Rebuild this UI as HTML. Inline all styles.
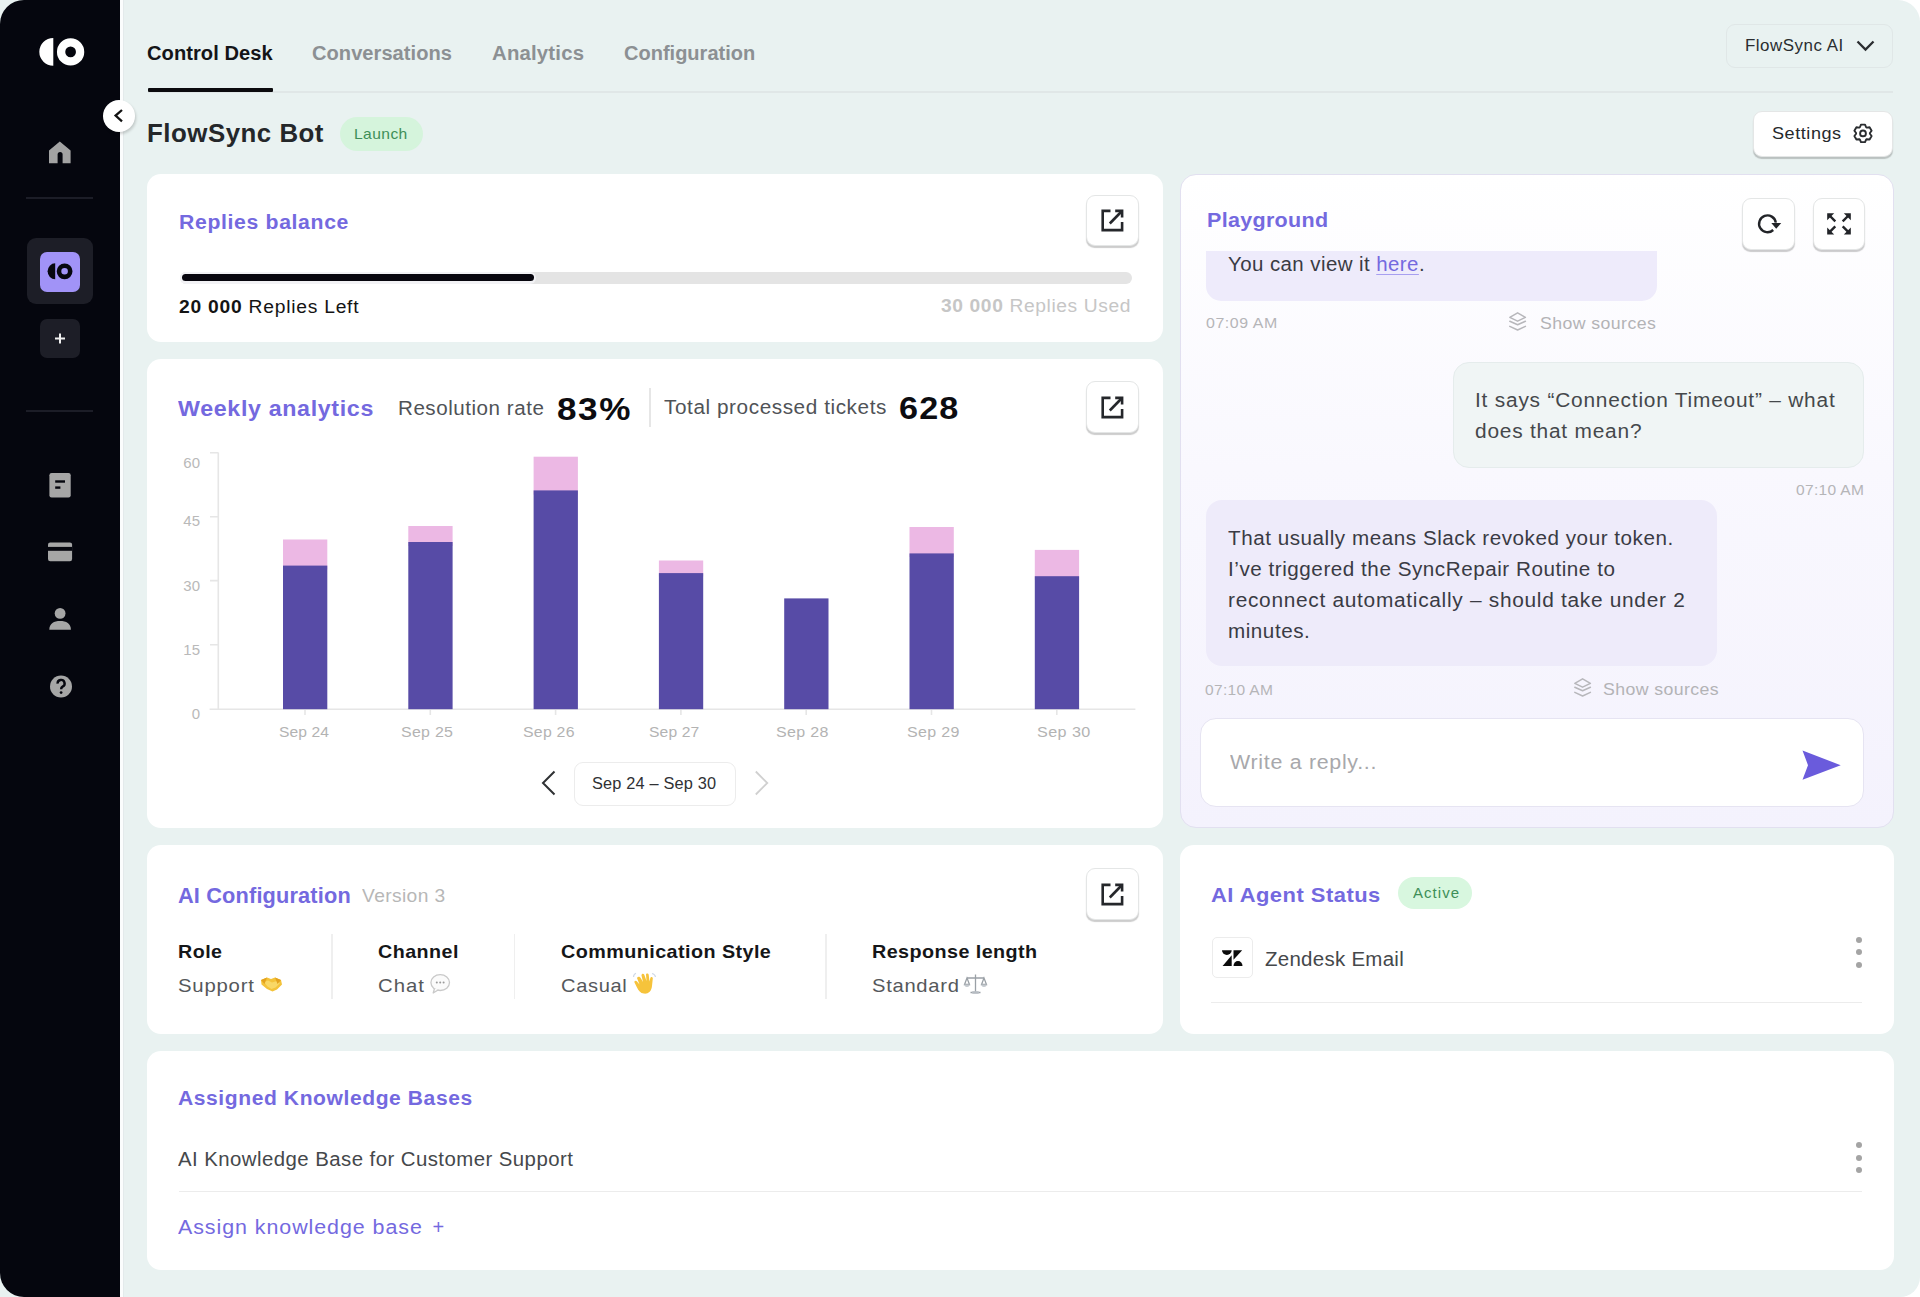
<!DOCTYPE html>
<html><head><meta charset="utf-8"><title>FlowSync Bot</title>
<style>
html,body{margin:0;padding:0;background:#ffffff;}
body{width:1920px;height:1297px;overflow:hidden;font-family:'Liberation Sans',sans-serif;}
#root{position:relative;width:1920px;height:1297px;overflow:hidden;background:#ffffff;}
.t{position:absolute;white-space:nowrap;line-height:1;font-family:'Liberation Sans',sans-serif;}
.abs{position:absolute;}
#main{position:absolute;left:0;top:0;width:1920px;height:1297px;background:#e9f2f1;border-radius:0 22px 20px 0;}
#side{position:absolute;left:0;top:0;width:120px;height:1297px;background:#05060e;border-radius:24px 0 0 24px;}
#sidestrip{position:absolute;left:120px;top:0;width:3px;height:1297px;background:#fbfdfd;border-right:1px solid #e3eaeb;}
.card{position:absolute;background:#ffffff;border-radius:14px;}
.ibtn{position:absolute;background:#fff;border:1px solid #e4e6e6;border-radius:9px;box-shadow:0 2.5px 1px -0.5px rgba(0,0,0,0.2);box-sizing:border-box;}
.sep{position:absolute;background:#1c1d27;height:2px;}
.gbar{position:absolute;}
.dots{position:absolute;width:6px;}
.dots i{display:block;width:6px;height:6px;border-radius:3px;background:#a4a4a4;margin-bottom:6.7px;}

</style></head><body>
<div id="root">
<div id="main"></div>
<div id="side"></div>
<div id="sidestrip"></div>

<!-- sidebar logo -->
<svg class="abs" style="left:36px;top:34px" width="52" height="36" viewBox="36 34 52 36">
  <path d="M53.3 37.9 A14 13.9 0 0 0 53.3 65.7 Z" fill="#fff"/>
  <circle cx="70.6" cy="51.9" r="9.5" fill="none" stroke="#fff" stroke-width="8.3"/>
</svg>
<!-- home -->
<svg class="abs" style="left:44px;top:136px" width="32" height="32" viewBox="44 136 32 32">
  <path d="M49 150.5 L59.8 141.6 L70.6 150.5 L70.6 163.2 L62.6 163.2 L62.6 154.5 A2.5 2.5 0 0 0 57.6 154.5 L57.6 163.2 L49 163.2 Z" fill="#a3a3a3"/>
</svg>
<div class="sep" style="left:26px;top:197px;width:67px"></div>
<div class="abs" style="left:27px;top:238px;width:66px;height:66px;background:#1d1e27;border-radius:9px"></div>
<div class="abs" style="left:40px;top:252px;width:40px;height:40px;background:#a193f7;border-radius:7px"></div>
<svg class="abs" style="left:40px;top:252px" width="40" height="40" viewBox="40 252 40 40">
  <path d="M55.2 263.3 A7.6 8 0 0 0 55.2 279.3 Z" fill="#07070f"/>
  <circle cx="64.6" cy="271.3" r="5.6" fill="none" stroke="#07070f" stroke-width="4.6"/>
</svg>
<div class="abs" style="left:40px;top:319px;width:40px;height:39px;background:#1d1e27;border-radius:7px"></div>
<svg class="abs" style="left:40px;top:319px" width="40" height="39" viewBox="0 0 40 39">
  <path d="M20 14.5 V24.5 M15 19.5 H25" stroke="#f0f0f0" stroke-width="2" />
</svg>
<div class="sep" style="left:26px;top:410px;width:67px"></div>
<!-- doc icon -->
<svg class="abs" style="left:44px;top:468px" width="32" height="34" viewBox="44 468 32 34">
  <rect x="49.4" y="473" width="21.3" height="24.4" rx="2.2" fill="#a6a6a6"/>
  <rect x="55.2" y="480.3" width="9.8" height="2.4" fill="#05060e"/>
  <rect x="55.2" y="486.4" width="5.2" height="2.4" fill="#05060e"/>
</svg>
<!-- card icon -->
<svg class="abs" style="left:44px;top:538px" width="32" height="28" viewBox="44 538 32 28">
  <rect x="48" y="542.4" width="24.1" height="18.9" rx="2.2" fill="#a6a6a6"/>
  <rect x="48" y="546.9" width="24.1" height="3.9" fill="#05060e"/>
</svg>
<!-- person icon -->
<svg class="abs" style="left:44px;top:602px" width="32" height="32" viewBox="44 602 32 32">
  <circle cx="60.1" cy="613.4" r="5.4" fill="#a6a6a6"/>
  <path d="M49.3 629.8 C49.3 623.5 54 621 60.1 621 C66.2 621 70.9 623.5 70.9 629.8 Z" fill="#a6a6a6"/>
</svg>
<!-- help icon -->
<svg class="abs" style="left:44px;top:670px" width="34" height="34" viewBox="44 670 34 34">
  <circle cx="61" cy="686.5" r="11" fill="#a6a6a6"/>
  <path d="M57.6 683.6 A3.5 3.5 0 1 1 62.6 686.6 C61.4 687.3 61.1 688 61.1 689.2" fill="none" stroke="#05060e" stroke-width="2.4"/>
  <circle cx="61.1" cy="692.6" r="1.4" fill="#05060e"/>
</svg>
<!-- collapse circle -->
<div class="abs" style="left:102.5px;top:100px;width:32px;height:32px;border-radius:50%;background:#fff;box-shadow:1px 2px 3px rgba(0,0,0,.18)"></div>
<svg class="abs" style="left:102.5px;top:100px" width="32" height="32" viewBox="0 0 32 32">
  <path d="M19 10 L12.6 15.6 L19 21.3" fill="none" stroke="#111" stroke-width="2.3"/>
</svg>

<!-- tabs -->
<div class="abs" style="left:148px;top:91px;width:1745px;height:1.5px;background:#e0e7e7"></div>
<div class="abs" style="left:148px;top:88px;width:125px;height:4px;background:#0b0b0e;border-radius:1px"></div>
<!-- flowsync AI dropdown -->
<div class="abs" style="left:1726px;top:23.5px;width:167px;height:44px;border:1px solid #e0e7e7;border-radius:9px;box-sizing:border-box;"></div>
<svg class="abs" style="left:1852px;top:36px" width="28" height="20" viewBox="1852 36 28 20">
  <path d="M1857.5 41.5 L1865.5 49.5 L1873.5 41.5" fill="none" stroke="#2a2d30" stroke-width="2.3"/>
</svg>
<!-- launch badge -->
<div class="abs" style="left:340px;top:117px;width:83px;height:33.5px;background:#d5f4dc;border-radius:17px"></div>
<!-- settings -->
<div class="ibtn" style="left:1752.5px;top:111px;width:140.5px;height:45.5px"></div>
<svg class="abs" style="left:1850px;top:120px" width="26" height="27" viewBox="1850 120 26 27">
  <path d="M1859.87 127.25 L1860.98 124.63 L1865.02 124.63 L1866.13 127.25 L1866.76 127.61 L1869.58 127.26 L1871.61 130.77 L1869.89 133.04 L1869.89 133.76 L1871.61 136.03 L1869.58 139.54 L1866.76 139.19 L1866.13 139.55 L1865.02 142.17 L1860.98 142.17 L1859.87 139.55 L1859.24 139.19 L1856.42 139.54 L1854.39 136.03 L1856.11 133.76 L1856.11 133.04 L1854.39 130.77 L1856.42 127.26 L1859.24 127.61 Z" fill="none" stroke="#2a2d30" stroke-width="1.9" stroke-linejoin="round"/>
  <circle cx="1863" cy="133.4" r="2.9" fill="none" stroke="#2a2d30" stroke-width="1.9"/>
</svg>

<!-- ===== card 1 ===== -->
<div class="card" style="left:147px;top:173.5px;width:1016px;height:168.5px"></div>
<div class="ibtn" style="left:1085.5px;top:194.5px;width:53.5px;height:51.5px"></div>
<svg class="abs" style="left:1099px;top:207px" width="28" height="28" viewBox="1099 207 28 28">
  <path d="M1110.8 210.9 H1102.7 V1230.1" fill="none"/>
  <path d="M1110.5 210.9 H1102.7 V230.1 H1122.1 V222" fill="none" stroke="#25272b" stroke-width="2.6"/>
  <path d="M1115.2 210.9 H1122.1 V217.6" fill="none" stroke="#25272b" stroke-width="2.6"/>
  <path d="M1109.8 223.5 L1121.5 211.5" fill="none" stroke="#25272b" stroke-width="2.6"/>
</svg>
<div class="abs" style="left:180px;top:271.8px;width:952px;height:12.5px;background:#e4e4e4;border-radius:6px"></div>
<div class="abs" style="left:180px;top:271.8px;width:356px;height:12.5px;background:#f2f2f5;border-radius:6px"></div>
<div class="abs" style="left:182px;top:274.4px;width:351.5px;height:6.9px;background:#07060e;border-radius:3.5px"></div>

<!-- ===== card 2 ===== -->
<div class="card" style="left:147px;top:358.5px;width:1016px;height:469.5px"></div>
<div class="abs" style="left:649px;top:388px;width:1.5px;height:39px;background:#e6e6e6"></div>
<div class="ibtn" style="left:1085.5px;top:381px;width:53.5px;height:51.5px"></div>
<svg class="abs" style="left:1099px;top:393.5px" width="28" height="28" viewBox="1099 207 28 28">
  <path d="M1110.5 210.9 H1102.7 V230.1 H1122.1 V222" fill="none" stroke="#25272b" stroke-width="2.6"/>
  <path d="M1115.2 210.9 H1122.1 V217.6" fill="none" stroke="#25272b" stroke-width="2.6"/>
  <path d="M1109.8 223.5 L1121.5 211.5" fill="none" stroke="#25272b" stroke-width="2.6"/>
</svg>
<!-- chart -->
<svg class="abs" style="left:0;top:0" width="1200" height="820" viewBox="0 0 1200 820">
  <g stroke="#e6e6e6" stroke-width="1.6" fill="none">
    <path d="M218.3 452.5 V709.2"/>
    <path d="M210 452.8 H218.3 M210 516.8 H218.3 M210 580.6 H218.3 M210 644.8 H218.3"/>
    <path d="M209.6 709.2 H1135.4"/>
    <path d="M305 709.2 V715 M430.3 709.2 V715 M555.6 709.2 V715 M680.9 709.2 V715 M806.2 709.2 V715 M931.5 709.2 V715 M1056.8 709.2 V715"/>
  </g>
  <g fill="#ecb8e4">
    <rect x="283" y="539.5" width="44.3" height="30"/>
    <rect x="408.3" y="526" width="44.3" height="20"/>
    <rect x="533.6" y="456.7" width="44.3" height="38"/>
    <rect x="658.9" y="560.5" width="44.3" height="16"/>
    <rect x="909.5" y="527" width="44.3" height="30"/>
    <rect x="1034.8" y="549.9" width="44.3" height="30"/>
  </g>
  <g fill="#574ba6">
    <rect x="283" y="565.6" width="44.3" height="143.6"/>
    <rect x="408.3" y="542" width="44.3" height="167.2"/>
    <rect x="533.6" y="490.4" width="44.3" height="218.8"/>
    <rect x="658.9" y="573.1" width="44.3" height="136.1"/>
    <rect x="784.2" y="598.4" width="44.3" height="110.8"/>
    <rect x="909.5" y="553.4" width="44.3" height="155.8"/>
    <rect x="1034.8" y="576.2" width="44.3" height="133"/>
  </g>
  <path d="M554.5 771.5 L543 783 L554.5 794.5" fill="none" stroke="#2f3134" stroke-width="2"/>
</svg>
<svg class="abs" style="left:740px;top:760px" width="40" height="40" viewBox="740 760 40 40">
  <path d="M755.8 771.5 L767.3 783 L755.8 794.5" fill="none" stroke="#d0d0d0" stroke-width="1.8"/>
</svg>
<div class="abs" style="left:574px;top:761.5px;width:161.5px;height:44px;border:1px solid #ececec;border-radius:9px;box-sizing:border-box"></div>

<!-- ===== playground ===== -->
<div class="abs" style="left:1180px;top:173.5px;width:713.5px;height:654.5px;border:1.5px solid #e2e0f0;border-radius:16px;box-sizing:border-box;background:linear-gradient(180deg,#ffffff 0%,#f9f8fe 45%,#f4f2fd 100%)"></div>
<div class="abs" style="left:1205.6px;top:250.5px;width:451.2px;height:50px;background:#eeebfb;border-radius:0 0 15px 15px"></div>
<div class="ibtn" style="left:1742.3px;top:198.2px;width:52.7px;height:51.5px"></div>
<div class="ibtn" style="left:1812.6px;top:198.2px;width:52.8px;height:51.5px"></div>
<svg class="abs" style="left:1755px;top:210px" width="28" height="28" viewBox="1755 210 28 28">
  <path d="M1773.2 230.0 A8.4 8.4 0 1 1 1775.8 222.6" fill="none" stroke="#222428" stroke-width="2.4"/>
  <path d="M1771.3 223.0 L1781.2 223.0 L1776.2 228.8 Z" fill="#222428"/>
</svg>
<svg class="abs" style="left:1822px;top:208px" width="34" height="32" viewBox="1822 208 34 32">
  <g fill="none" stroke="#222428" stroke-width="2.4">
    <path d="M1828.5 214.5 L1835.3 221.3"/>
    <path d="M1849.5 214.5 L1842.7 221.3"/>
    <path d="M1828.5 233.2 L1835.3 226.4"/>
    <path d="M1849.5 233.2 L1842.7 226.4"/>
  </g>
  <g fill="#222428">
    <path d="M1827.2 213.2 H1834.2 L1827.2 220.2 Z"/>
    <path d="M1850.8 213.2 H1843.8 L1850.8 220.2 Z"/>
    <path d="M1827.2 234.5 H1834.2 L1827.2 227.5 Z"/>
    <path d="M1850.8 234.5 H1843.8 L1850.8 227.5 Z"/>
  </g>
</svg>
<!-- layers icons -->
<svg class="abs" style="left:1508px;top:311px" width="24" height="24" viewBox="0 0 24 24">
  <g fill="none" stroke="#b7b7bb" stroke-width="1.5" stroke-linejoin="round" stroke-linecap="round">
    <path d="M9.6 1.8 L17.4 6.3 L9.6 10.2 L1.8 6.3 Z"/>
    <path d="M1.8 10.3 L9.6 13.8 L17.4 10.3"/>
    <path d="M1.8 15.4 L9.6 19.0 L17.4 15.4"/>
  </g>
</svg>
<svg class="abs" style="left:1572.8px;top:677.2px" width="24" height="24" viewBox="0 0 24 24">
  <g fill="none" stroke="#b7b7bb" stroke-width="1.5" stroke-linejoin="round" stroke-linecap="round">
    <path d="M9.6 1.8 L17.4 6.3 L9.6 10.2 L1.8 6.3 Z"/>
    <path d="M1.8 10.3 L9.6 13.8 L17.4 10.3"/>
    <path d="M1.8 15.4 L9.6 19.0 L17.4 15.4"/>
  </g>
</svg>
<div class="abs" style="left:1452.6px;top:361.5px;width:411.3px;height:106.5px;background:#f0f5f5;border:1px solid #e5ecec;border-radius:16px;box-sizing:border-box"></div>
<div class="abs" style="left:1205.8px;top:500px;width:511.4px;height:166.2px;background:#eeebfa;border-radius:16px"></div>
<div class="abs" style="left:1200.2px;top:717.8px;width:664.2px;height:89.2px;background:#fff;border:1px solid #e6e4f2;border-radius:16px;box-sizing:border-box"></div>
<svg class="abs" style="left:1798px;top:746px" width="48" height="38" viewBox="1798 746 48 38">
  <path d="M1802.5 750.6 L1840.7 765.2 L1802.5 779.7 L1808 765.2 Z" fill="#6a5bdc"/>
</svg>

<!-- ===== AI config card ===== -->
<div class="card" style="left:147px;top:844.5px;width:1016px;height:189px"></div>
<div class="ibtn" style="left:1085.5px;top:868px;width:53.5px;height:51.5px"></div>
<svg class="abs" style="left:1099px;top:880.5px" width="28" height="28" viewBox="1099 207 28 28">
  <path d="M1110.5 210.9 H1102.7 V230.1 H1122.1 V222" fill="none" stroke="#25272b" stroke-width="2.6"/>
  <path d="M1115.2 210.9 H1122.1 V217.6" fill="none" stroke="#25272b" stroke-width="2.6"/>
  <path d="M1109.8 223.5 L1121.5 211.5" fill="none" stroke="#25272b" stroke-width="2.6"/>
</svg>
<div class="abs" style="left:331.2px;top:934px;width:1.5px;height:65px;background:#efefef"></div>
<div class="abs" style="left:513.8px;top:934px;width:1.5px;height:65px;background:#efefef"></div>
<div class="abs" style="left:825.3px;top:934px;width:1.5px;height:65px;background:#efefef"></div>

<!-- ===== agent status ===== -->
<div class="card" style="left:1180px;top:844.5px;width:714px;height:189.5px"></div>
<div class="abs" style="left:1398.4px;top:877.2px;width:73.5px;height:32px;background:#d8f7df;border-radius:16px"></div>
<div class="abs" style="left:1211.7px;top:937.3px;width:41.4px;height:40.7px;border:1px solid #ececec;border-radius:5px;box-sizing:border-box;background:#fff"></div>
<svg class="abs" style="left:1218px;top:946px" width="30" height="26" viewBox="1218 946 30 26">
  <path d="M1222 950.3 H1231.7 A4.85 4.6 0 0 1 1222 950.3 Z" fill="#0b0b0b"/>
  <path d="M1222.6 965.9 L1231.7 955.3 V965.9 Z" fill="#0b0b0b"/>
  <path d="M1233.5 950.3 H1242.2 L1233.5 959.7 Z" fill="#0b0b0b"/>
  <path d="M1233.5 965.9 A4.5 4.9 0 0 1 1242.5 965.9 Z" fill="#0b0b0b"/>
</svg>
<div class="dots" style="left:1855.7px;top:936.6px"><i></i><i></i><i></i></div>
<div class="abs" style="left:1211px;top:1001.5px;width:651px;height:1.5px;background:#ececec"></div>

<!-- ===== knowledge ===== -->
<div class="card" style="left:147px;top:1051px;width:1747px;height:219px"></div>
<div class="dots" style="left:1855.8px;top:1141.9px"><i></i><i></i><i></i></div>
<div class="abs" style="left:179px;top:1190.5px;width:1683px;height:1.5px;background:#ececec"></div>

<!-- emojis -->
<svg class="abs" style="left:258px;top:972px" width="26" height="24" viewBox="0 0 26 24">
  <path d="M3 8 L9 5.5 L13 7 L17 5.5 L23 8 L24 12.5 L19 17.5 L14.5 19.5 L9 17 L3.5 12.5 Z" fill="#f4c33a"/>
  <path d="M6 10 L10 8.5 L14 10.5 L19 9 L22 11 L17.5 15.5 L13.5 17 L9.5 14.5 Z" fill="#f9d866"/>
  <path d="M3 8 L9 5.5 L6.5 12 Z M23 8 L17 5.5 L19.5 12 Z" fill="#e3a21e"/>
</svg>
<svg class="abs" style="left:428px;top:972px" width="24" height="24" viewBox="0 0 24 24">
  <ellipse cx="12.2" cy="10.6" rx="9.3" ry="7.9" fill="#fbfbfb" stroke="#c9c9c9" stroke-width="1.3"/>
  <path d="M6.5 16.5 L5.2 21 L10.5 17.8" fill="#fbfbfb" stroke="#c9c9c9" stroke-width="1.3" stroke-linejoin="round"/>
  <circle cx="8.8" cy="10.6" r="1" fill="#9a9a9a"/><circle cx="12.2" cy="10.6" r="1" fill="#9a9a9a"/><circle cx="15.6" cy="10.6" r="1" fill="#9a9a9a"/>
</svg>
<svg class="abs" style="left:631px;top:971px" width="26" height="26" viewBox="0 0 26 26">
  <path d="M6 7 C7 5 9 5.5 10 7.5 L12 11 L10.5 4.5 C10.3 2.8 12.6 2.2 13.3 3.8 L15.5 10 L15 3.8 C15 2 17.4 2 17.7 3.8 L18.5 10.5 L19.4 6.8 C19.9 5.3 22 5.8 21.8 7.6 L21 15 C20.5 20.5 17 23.2 12.8 22.6 C9.5 22.1 7.5 19.8 6 16.5 L3.5 11.5 C2.8 10 4.8 9 5.8 10.2 L8.5 13.5 Z" fill="#f6c33b"/>
  <path d="M2.5 6 C2.5 4 3.5 2.8 5 2.2 M21 2.5 C23 3 24.2 4.3 24.5 6" fill="none" stroke="#cfd8e6" stroke-width="1.2"/>
</svg>
<svg class="abs" style="left:963px;top:972px" width="26" height="24" viewBox="0 0 26 24">
  <g fill="none" stroke="#9aa0a6" stroke-width="1.3">
    <path d="M12.5 2.5 V19.5 M4 6 H21 M7.5 20.5 H17.5"/>
    <path d="M4 6 L1.5 12.5 H6.5 Z M21 6 L18.5 12.5 H23.5 Z"/>
  </g>
  <path d="M1.3 12.5 A2.7 2.4 0 0 0 6.7 12.5 Z M18.3 12.5 A2.7 2.4 0 0 0 23.7 12.5 Z" fill="#c4c9ce"/>
  <rect x="9" y="19.2" width="7" height="2.6" rx="1" fill="#b6bcc2"/>
</svg>

<div class="t" style="left:147.00px;top:43.07px;font-size:20px;font-weight:700;color:#141518;letter-spacing:0.056px;transform:scaleX(1.0049);transform-origin:0 0;">Control Desk</div><div class="t" style="left:312.00px;top:43.07px;font-size:20px;font-weight:700;color:#8c9093;letter-spacing:0.040px;transform:scaleX(1.0035);transform-origin:0 0;">Conversations</div><div class="t" style="left:491.50px;top:43.07px;font-size:20px;font-weight:700;color:#8c9093;letter-spacing:0.188px;transform:scaleX(1.0172);transform-origin:0 0;">Analytics</div><div class="t" style="left:624.00px;top:43.07px;font-size:20px;font-weight:700;color:#8c9093;letter-spacing:0.004px;transform:scaleX(1.0004);transform-origin:0 0;">Configuration</div><div class="t" style="left:1745.20px;top:37.56px;font-size:16px;font-weight:400;color:#2a2d30;letter-spacing:0.483px;transform:scaleX(1.0581);transform-origin:0 0;">FlowSync AI</div><div class="t" style="left:146.55px;top:121.34px;font-size:25px;font-weight:700;color:#24272a;letter-spacing:0.492px;transform:scaleX(1.0339);transform-origin:0 0;">FlowSync Bot</div><div class="t" style="left:354.05px;top:125.90px;font-size:15px;font-weight:400;color:#3e8f58;letter-spacing:0.391px;transform:scaleX(1.0415);transform-origin:0 0;">Launch</div><div class="t" style="left:1772.35px;top:124.61px;font-size:17px;font-weight:400;color:#26292c;letter-spacing:0.517px;transform:scaleX(1.0625);transform-origin:0 0;">Settings</div><div class="t" style="left:178.90px;top:212.27px;font-size:20px;font-weight:700;color:#7469df;letter-spacing:0.614px;transform:scaleX(1.0602);transform-origin:0 0;">Replies balance</div><div class="t" style="left:178.60px;top:297.76px;font-size:18px;font-weight:400;color:#141414;letter-spacing:0.706px;transform:scaleX(1.07);transform-origin:0 0;"><b>20 000</b> Replies Left</div><div class="t" style="left:940.60px;top:297.46px;font-size:18px;font-weight:400;color:#c6c6c6;letter-spacing:0.582px;transform:scaleX(1.0669);transform-origin:0 0;"><b>30 000</b> Replies Used</div><div class="t" style="left:177.90px;top:398.08px;font-size:22px;font-weight:700;color:#7469df;letter-spacing:0.620px;transform:scaleX(1.0558);transform-origin:0 0;">Weekly analytics</div><div class="t" style="left:398.02px;top:398.99px;font-size:19.5px;font-weight:400;color:#505357;letter-spacing:0.497px;transform:scaleX(1.056);transform-origin:0 0;">Resolution rate</div><div class="t" style="left:557.48px;top:393.68px;font-size:30.5px;font-weight:700;color:#0c0c10;letter-spacing:1.359px;transform:scaleX(1.15);transform-origin:0 0;">83%</div><div class="t" style="left:663.82px;top:398.49px;font-size:19.5px;font-weight:400;color:#505357;letter-spacing:0.537px;transform:scaleX(1.0636);transform-origin:0 0;">Total processed tickets</div><div class="t" style="left:898.68px;top:393.18px;font-size:30.5px;font-weight:700;color:#0c0c10;letter-spacing:1.041px;transform:scaleX(1.12);transform-origin:0 0;">628</div><div class="t" style="left:183.31px;top:454.60px;font-size:15px;font-weight:400;color:#b9b9b9;letter-spacing:0.000px;">60</div><div class="t" style="left:183.31px;top:513.30px;font-size:15px;font-weight:400;color:#b9b9b9;letter-spacing:0.000px;">45</div><div class="t" style="left:183.31px;top:577.90px;font-size:15px;font-weight:400;color:#b9b9b9;letter-spacing:0.000px;">30</div><div class="t" style="left:183.31px;top:642.30px;font-size:15px;font-weight:400;color:#b9b9b9;letter-spacing:0.000px;">15</div><div class="t" style="left:191.66px;top:706.00px;font-size:15px;font-weight:400;color:#b9b9b9;letter-spacing:0.000px;">0</div><div class="t" style="left:279.43px;top:724.08px;font-size:15.5px;font-weight:400;color:#b3b3b3;letter-spacing:0.089px;transform:scaleX(1.009);transform-origin:0 0;">Sep 24</div><div class="t" style="left:401.23px;top:724.08px;font-size:15.5px;font-weight:400;color:#b3b3b3;letter-spacing:0.271px;transform:scaleX(1.0284);transform-origin:0 0;">Sep 25</div><div class="t" style="left:523.23px;top:724.08px;font-size:15.5px;font-weight:400;color:#b3b3b3;letter-spacing:0.233px;transform:scaleX(1.0243);transform-origin:0 0;">Sep 26</div><div class="t" style="left:648.52px;top:724.08px;font-size:15.5px;font-weight:400;color:#b3b3b3;letter-spacing:0.108px;transform:scaleX(1.0111);transform-origin:0 0;">Sep 27</div><div class="t" style="left:776.43px;top:724.08px;font-size:15.5px;font-weight:400;color:#b3b3b3;letter-spacing:0.318px;transform:scaleX(1.0335);transform-origin:0 0;">Sep 28</div><div class="t" style="left:906.83px;top:724.08px;font-size:15.5px;font-weight:400;color:#b3b3b3;letter-spacing:0.318px;transform:scaleX(1.0335);transform-origin:0 0;">Sep 29</div><div class="t" style="left:1037.02px;top:724.08px;font-size:15.5px;font-weight:400;color:#b3b3b3;letter-spacing:0.402px;transform:scaleX(1.0426);transform-origin:0 0;">Sep 30</div><div class="t" style="left:591.90px;top:775.96px;font-size:16px;font-weight:400;color:#2f3134;letter-spacing:0.173px;transform:scaleX(1.0207);transform-origin:0 0;">Sep 24 – Sep 30</div><div class="t" style="left:1207.15px;top:209.32px;font-size:21px;font-weight:700;color:#7469df;letter-spacing:0.301px;transform:scaleX(1.024);transform-origin:0 0;">Playground</div><div class="t" style="left:1228.03px;top:254.89px;font-size:19.5px;font-weight:400;color:#3a3b44;letter-spacing:0.413px;transform:scaleX(1.0484);transform-origin:0 0;">You can view it <span style="color:#7469df;text-decoration:underline;text-decoration-color:#a79ff0;text-underline-offset:3px">here</span>.</div><div class="t" style="left:1205.55px;top:314.70px;font-size:15px;font-weight:400;color:#b5b5b8;letter-spacing:0.525px;transform:scaleX(1.0616);transform-origin:0 0;">07:09 AM</div><div class="t" style="left:1539.95px;top:315.01px;font-size:17px;font-weight:400;color:#b3b3b6;letter-spacing:0.394px;transform:scaleX(1.0423);transform-origin:0 0;">Show sources</div><div class="t" style="left:1474.53px;top:390.79px;font-size:19.5px;font-weight:400;color:#45484b;letter-spacing:0.738px;transform:scaleX(1.07);transform-origin:0 0;">It says “Connection Timeout” – what</div><div class="t" style="left:1474.53px;top:421.69px;font-size:19.5px;font-weight:400;color:#45484b;letter-spacing:0.738px;transform:scaleX(1.07);transform-origin:0 0;">does that mean?</div><div class="t" style="left:1796.25px;top:481.70px;font-size:15px;font-weight:400;color:#b5b5b8;letter-spacing:0.311px;transform:scaleX(1.0356);transform-origin:0 0;">07:10 AM</div><div class="t" style="left:1227.73px;top:529.09px;font-size:19.5px;font-weight:400;color:#3a3b44;letter-spacing:0.509px;transform:scaleX(1.0582);transform-origin:0 0;">That usually means Slack revoked your token.</div><div class="t" style="left:1227.73px;top:560.09px;font-size:19.5px;font-weight:400;color:#3a3b44;letter-spacing:0.509px;transform:scaleX(1.0582);transform-origin:0 0;">I’ve triggered the SyncRepair Routine to</div><div class="t" style="left:1227.73px;top:591.09px;font-size:19.5px;font-weight:400;color:#3a3b44;letter-spacing:0.660px;transform:scaleX(1.07);transform-origin:0 0;">reconnect automatically – should take under 2</div><div class="t" style="left:1227.73px;top:622.09px;font-size:19.5px;font-weight:400;color:#3a3b44;letter-spacing:0.509px;transform:scaleX(1.0582);transform-origin:0 0;">minutes.</div><div class="t" style="left:1205.25px;top:682.20px;font-size:15px;font-weight:400;color:#b5b5b8;letter-spacing:0.311px;transform:scaleX(1.0356);transform-origin:0 0;">07:10 AM</div><div class="t" style="left:1603.15px;top:680.61px;font-size:17px;font-weight:400;color:#b3b3b6;letter-spacing:0.390px;transform:scaleX(1.0419);transform-origin:0 0;">Show sources</div><div class="t" style="left:1229.80px;top:751.87px;font-size:20px;font-weight:400;color:#a8a8ab;letter-spacing:0.650px;transform:scaleX(1.07);transform-origin:0 0;">Write a reply...</div><div class="t" style="left:178.03px;top:885.50px;font-size:21.5px;font-weight:700;color:#7469df;letter-spacing:0.141px;transform:scaleX(1.0128);transform-origin:0 0;">AI Configuration</div><div class="t" style="left:362.27px;top:886.74px;font-size:18.5px;font-weight:400;color:#b7b7b7;letter-spacing:0.359px;transform:scaleX(1.0387);transform-origin:0 0;">Version 3</div><div class="t" style="left:178.15px;top:942.32px;font-size:19px;font-weight:700;color:#151618;letter-spacing:0.460px;transform:scaleX(1.0346);transform-origin:0 0;">Role</div><div class="t" style="left:178.15px;top:976.02px;font-size:19px;font-weight:400;color:#55585b;letter-spacing:0.724px;transform:scaleX(1.0698);transform-origin:0 0;">Support</div><div class="t" style="left:377.75px;top:942.32px;font-size:19px;font-weight:700;color:#151618;letter-spacing:0.441px;transform:scaleX(1.0366);transform-origin:0 0;">Channel</div><div class="t" style="left:377.75px;top:976.02px;font-size:19px;font-weight:400;color:#55585b;letter-spacing:0.900px;transform:scaleX(1.07);transform-origin:0 0;">Chat</div><div class="t" style="left:560.65px;top:942.32px;font-size:19px;font-weight:700;color:#151618;letter-spacing:0.417px;transform:scaleX(1.0401);transform-origin:0 0;">Communication Style</div><div class="t" style="left:560.65px;top:976.02px;font-size:19px;font-weight:400;color:#55585b;letter-spacing:0.633px;transform:scaleX(1.0565);transform-origin:0 0;">Casual</div><div class="t" style="left:871.95px;top:942.32px;font-size:19px;font-weight:700;color:#151618;letter-spacing:0.414px;transform:scaleX(1.0394);transform-origin:0 0;">Response length</div><div class="t" style="left:871.95px;top:976.02px;font-size:19px;font-weight:400;color:#55585b;letter-spacing:0.659px;transform:scaleX(1.0636);transform-origin:0 0;">Standard</div><div class="t" style="left:1210.65px;top:883.62px;font-size:21px;font-weight:700;color:#7469df;letter-spacing:0.469px;transform:scaleX(1.044);transform-origin:0 0;">AI Agent Status</div><div class="t" style="left:1412.60px;top:886.45px;font-size:14px;font-weight:400;color:#3e8f58;letter-spacing:0.999px;transform:scaleX(1.07);transform-origin:0 0;">Active</div><div class="t" style="left:1264.60px;top:949.07px;font-size:20px;font-weight:400;color:#45484b;letter-spacing:0.261px;transform:scaleX(1.0243);transform-origin:0 0;">Zendesk Email</div><div class="t" style="left:178.40px;top:1087.77px;font-size:20px;font-weight:700;color:#7469df;letter-spacing:0.567px;transform:scaleX(1.0515);transform-origin:0 0;">Assigned Knowledge Bases</div><div class="t" style="left:178.43px;top:1149.79px;font-size:19.5px;font-weight:400;color:#45484b;letter-spacing:0.424px;transform:scaleX(1.0454);transform-origin:0 0;">AI Knowledge Base for Customer Support</div><div class="t" style="left:178.40px;top:1216.57px;font-size:20px;font-weight:400;color:#7469df;letter-spacing:0.885px;transform:scaleX(1.07);transform-origin:0 0;">Assign knowledge base</div><div class="t" style="left:432.50px;top:1216.57px;font-size:20px;font-weight:400;color:#7469df;letter-spacing:0.000px;">+</div>
</div>
</body></html>
